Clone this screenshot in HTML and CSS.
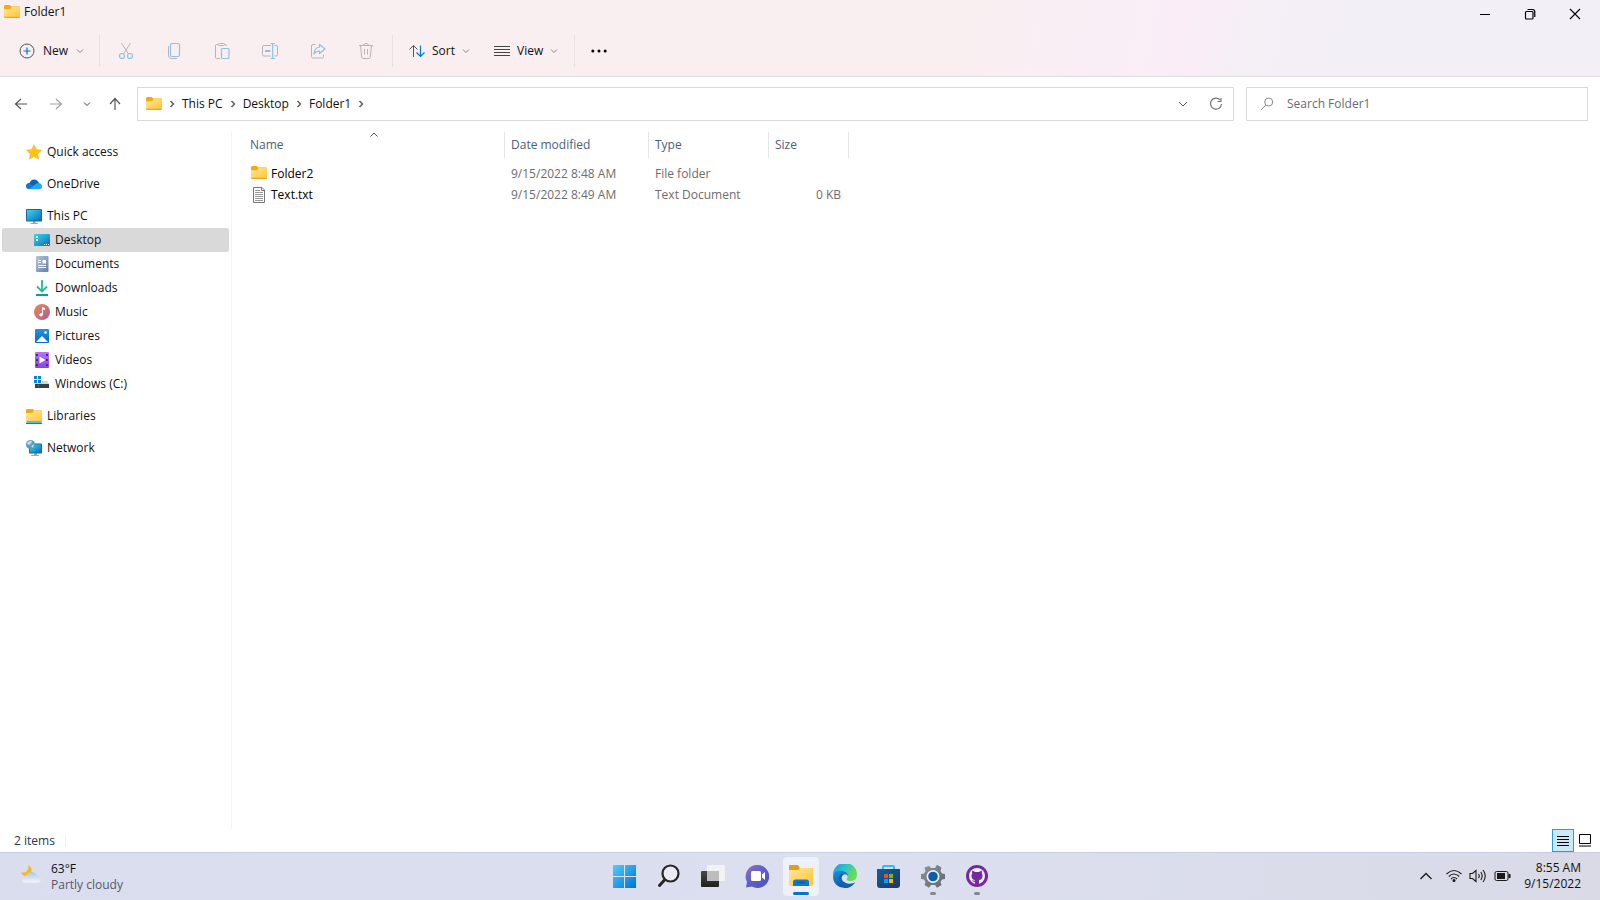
FILE: index.html
```html
<!DOCTYPE html>
<html lang="en">
<head>
<meta charset="utf-8">
<title>Folder1</title>
<link rel="stylesheet" href="styles.css">
</head>
<body>
<svg class="defs" aria-hidden="true">
  <defs>
    <linearGradient id="gFolder" x1="0" y1="0" x2="1" y2="1"><stop offset="0" stop-color="#ffe69a"/><stop offset="1" stop-color="#ffc534"/></linearGradient>
    <linearGradient id="gScreen" x1="0" y1="0" x2="1" y2="1"><stop offset="0" stop-color="#35dbe6"/><stop offset="1" stop-color="#0f68bd"/></linearGradient>
    <linearGradient id="gDoc" x1="0" y1="0" x2="1" y2="1"><stop offset="0" stop-color="#b4c6de"/><stop offset="1" stop-color="#687f9f"/></linearGradient>
    <linearGradient id="gMusic" x1="0" y1="0" x2="1" y2="1"><stop offset="0" stop-color="#f08b55"/><stop offset="1" stop-color="#a85a95"/></linearGradient>
    <linearGradient id="gPic" x1="0" y1="0" x2="0" y2="1"><stop offset="0" stop-color="#1d96e8"/><stop offset="1" stop-color="#0967c2"/></linearGradient>
    <linearGradient id="gVideo" x1="0" y1="0" x2="0" y2="1"><stop offset="0" stop-color="#b477f2"/><stop offset="1" stop-color="#8b43e0"/></linearGradient>
    <linearGradient id="gWin" x1="0" y1="0" x2="1" y2="1"><stop offset="0" stop-color="#4fd0fa"/><stop offset="1" stop-color="#0070d4"/></linearGradient>
    <linearGradient id="gChat" x1="0" y1="0" x2="1" y2="1"><stop offset="0" stop-color="#9a6fb4"/><stop offset="0.4" stop-color="#6661c8"/><stop offset="1" stop-color="#4b50bd"/></linearGradient>
    <linearGradient id="gDark" x1="0" y1="0" x2="0" y2="1"><stop offset="0" stop-color="#484848"/><stop offset="1" stop-color="#1f1f1f"/></linearGradient>
    <linearGradient id="gStore" x1="0" y1="0" x2="1" y2="1"><stop offset="0" stop-color="#0f5f9f"/><stop offset="1" stop-color="#213764"/></linearGradient>
    <linearGradient id="gEdgeTop" x1="0" y1="0" x2="1" y2="0.4"><stop offset="0" stop-color="#1a95dc"/><stop offset="0.5" stop-color="#2cc0cf"/><stop offset="1" stop-color="#69de54"/></linearGradient>
    <linearGradient id="gEdgeLow" x1="0" y1="0" x2="0.6" y2="1"><stop offset="0" stop-color="#1592dd"/><stop offset="1" stop-color="#0a529f"/></linearGradient>
    <linearGradient id="gGear" x1="0" y1="0" x2="1" y2="1"><stop offset="0" stop-color="#8d969e"/><stop offset="1" stop-color="#5e666e"/></linearGradient>
    <linearGradient id="gCloud" x1="0" y1="0" x2="0" y2="1"><stop offset="0" stop-color="#a9c6e4"/><stop offset="1" stop-color="#f1f7fc"/></linearGradient>
    <symbol id="folder" viewBox="0 0 16 13"><path d="M0 1.500Q0 0 1.500 0H5.500L7.500 1.500H16V5H0z" fill="#f2ab09"/><path d="M0 4.200H6L7.800 2H15.500Q16 2 16 2.500V11.500Q16 12.500 15 12.500H1Q0 12.500 0 11.500z" fill="url(#gFolder)"/><path d="M0 11.800Q.3 13 1 13H15Q15.800 13 16 11.800z" fill="#eba51e"/></symbol>
    <symbol id="down" viewBox="0 0 8 8"><path d="M1 2.500 4 5.500 7 2.500" fill="none" stroke="currentColor"/></symbol>
    <symbol id="right" viewBox="0 0 8 8"><path d="M2.500 1 5.500 4 2.500 7" fill="none" stroke="currentColor" stroke-width="1.400"/></symbol>
  </defs>
</svg>

<div class="window">
  <header class="top">
    <div class="titlebar">
      <div class="title"><svg class="folder"><use href="#folder"/></svg><span>Folder1</span></div>
      <div class="caption">
        <button aria-label="Minimize"><svg width="12" height="12" viewBox="0 0 12 12"><path d="M1 6.500H11" stroke="#000"/></svg></button>
        <button aria-label="Restore"><svg width="12" height="12" viewBox="0 0 12 12" fill="none" stroke="#000" stroke-width="1.200"><rect x="1.500" y="3.500" width="7.500" height="7.500" rx="1"/><path d="M3.500 1.500H8.500Q10.800 1.500 10.800 4V9"/></svg></button>
        <button aria-label="Close"><svg width="12" height="12" viewBox="0 0 12 12"><path d="M1 1 11 11M11 1 1 11" stroke="#000" stroke-width="1.100"/></svg></button>
      </div>
    </div>
    <div class="toolbar">
      <button class="tool tool-new"><svg width="16" height="16" viewBox="0 0 16 16" fill="none"><circle cx="8" cy="8" r="7" stroke="#555"/><path d="M8 4.500V11.500M4.500 8H11.500" stroke="#0078d4" stroke-width="1.200"/></svg><span>New</span><svg class="chev"><use href="#down"/></svg></button>
      <div class="group">
        <button class="icon" aria-label="Cut" disabled><svg width="16" height="18" viewBox="0 0 16 18" fill="none"><path d="M3.500 1 10.500 12M12.500 1 5.500 12" stroke="#b9b3b5"/><circle cx="4" cy="14" r="2.500" stroke="#8fc0e8" stroke-width="1.200"/><circle cx="12" cy="14" r="2.500" stroke="#8fc0e8" stroke-width="1.200"/></svg></button>
        <button class="icon" aria-label="Copy" disabled><svg width="16" height="18" viewBox="0 0 16 18" fill="none"><path d="M2.500 4V13Q2.500 16.500 5.500 16.500H11" stroke="#b9b3b5"/><rect x="4.500" y="1.500" width="9" height="13" rx="1.500" stroke="#8fc0e8" stroke-width="1.200"/></svg></button>
        <button class="icon" aria-label="Paste" disabled><svg width="16" height="18" viewBox="0 0 16 18" fill="none"><path d="M4.500 2.500H2.500Q1.500 2.500 1.500 3.500V15.500Q1.500 16.500 2.500 16.500H6M10.500 2.500H11.500Q12.500 2.500 12.500 4" stroke="#b9b3b5"/><rect x="4.500" y="1.500" width="6" height="2" rx="1" stroke="#b9b3b5"/><rect x="7.500" y="6.500" width="7.500" height="10" rx="1" stroke="#8fc0e8" stroke-width="1.200"/></svg></button>
        <button class="icon" aria-label="Rename" disabled><svg width="16" height="18" viewBox="0 0 16 18" fill="none"><path d="M9 3.500H2Q.5 3.500 .5 5V12.500Q.5 14 2 14H9M12.500 3.500H14Q15.500 3.500 15.500 5V12.500Q15.500 14 14 14H12.500" stroke="#b9b3b5"/><path d="M3 9H8.500" stroke="#8fc0e8" stroke-width="2"/><path d="M8.500 1.500H13M10.700 1.500V16.500M8.500 16.500H13" stroke="#8fc0e8" stroke-width="1.200"/></svg></button>
        <button class="icon" aria-label="Share" disabled><svg width="16" height="18" viewBox="0 0 16 18" fill="none"><path d="M5.500 2.500H3Q1.500 2.500 1.500 4V14.500Q1.500 16 3 16H12Q13.500 16 13.500 14.500V12.500" stroke="#b9b3b5"/><path d="M9.500 2.500 15 7 9.500 11.500V9Q6 9 4 12Q4.500 5.500 9.500 5z" stroke="#8fc0e8" stroke-width="1.200" stroke-linejoin="round"/></svg></button>
        <button class="icon" aria-label="Delete" disabled><svg width="16" height="18" viewBox="0 0 16 18" fill="none" stroke="#b9b3b5"><path d="M1 3.500H15M5.500 3.500Q5.500 1.500 8 1.500T10.500 3.500M2.500 3.500 3.800 15.500Q4 16.500 5 16.500H11Q12 16.500 12.200 15.500L13.500 3.500M6.500 7V12.500M9.500 7V12.500"/></svg></button>
      </div>
      <div class="group views">
        <button class="tool"><svg width="16" height="16" viewBox="0 0 16 16" fill="none"><path d="M.5 6.500 4.500 2.500 8.500 6.500M4.500 2.500V14" stroke="#555"/><path d="M7.500 9.500 11.500 13.500 15.500 9.500M11.500 2.500V13.500" stroke="#0078d4" stroke-width="1.200"/></svg><span>Sort</span><svg class="chev"><use href="#down"/></svg></button>
        <button class="tool"><svg width="16" height="16" viewBox="0 0 16 16"><path d="M0 3.500H16M0 6.500H16M0 9.500H16M0 12.500H16" stroke="#444"/></svg><span>View</span><svg class="chev"><use href="#down"/></svg></button>
      </div>
      <button class="more" aria-label="See more"><svg width="16" height="4" viewBox="0 0 16 4"><circle cx="1.800" cy="2" r="1.500"/><circle cx="8" cy="2" r="1.500"/><circle cx="14.200" cy="2" r="1.500"/></svg></button>
    </div>
  </header>

  <nav class="navbar" aria-label="Navigation">
    <div class="history">
      <button aria-label="Back"><svg width="14" height="14" viewBox="0 0 14 14" fill="none" stroke="#555" stroke-width="1.200"><path d="M7 2 1.500 7 7 12M1.500 7H13"/></svg></button>
      <button aria-label="Forward"><svg width="14" height="14" viewBox="0 0 14 14" fill="none" stroke="#a0a0a0" stroke-width="1.200"><path d="M7 2 12.500 7 7 12M12.500 7H1"/></svg></button>
      <button aria-label="Recent locations"><svg class="chev dark"><use href="#down"/></svg></button>
      <button aria-label="Up"><svg width="14" height="14" viewBox="0 0 14 14" fill="none" stroke="#555" stroke-width="1.200"><path d="M2 7 7 1.500 12 7M7 1.500V13"/></svg></button>
    </div>
    <div class="address">
      <svg class="folder"><use href="#folder"/></svg>
      <svg class="sep"><use href="#right"/></svg><a href="#pc">This PC</a>
      <svg class="sep"><use href="#right"/></svg><a href="#desktop">Desktop</a>
      <svg class="sep"><use href="#right"/></svg><a href="#folder1">Folder1</a>
      <svg class="sep"><use href="#right"/></svg>
      <div class="address-actions">
        <button aria-label="Previous locations"><svg width="10" height="10" viewBox="0 0 10 10"><path d="M1 3 5 7 9 3" fill="none" stroke="#555"/></svg></button>
        <button aria-label="Refresh"><svg width="14" height="14" viewBox="0 0 14 14" fill="none" stroke="#777" stroke-width="1.200"><path d="M11 2.800A5.500 5.500 0 1 0 12.500 7M12 1V4.500H8.500"/></svg></button>
      </div>
    </div>
    <label class="search"><svg width="14" height="14" viewBox="0 0 14 14" fill="none" stroke="#888"><circle cx="8.700" cy="5" r="4"/><path d="M5.800 8 1 13"/></svg><input type="text" placeholder="Search Folder1" aria-label="Search Folder1"></label>
  </nav>

  <main class="content">
    <nav class="sidebar" aria-label="Folders">
      <ul>
        <li class="gap"><a href="#quick"><svg viewBox="0 0 16 16"><path d="M8 .8 10.300 5.500 15.500 6.200 11.700 9.900 12.600 15 8 12.600 3.400 15 4.300 9.900 .5 6.200 5.700 5.500z" fill="#ffc20e" stroke="#f7ad12" stroke-width=".5"/></svg>Quick access</a></li>
        <li class="gap"><a href="#onedrive"><svg viewBox="0 0 16 16"><path d="M0 10Q.3 7 3.500 7Q5 3 9 3.500Q12 4 13 7L6 12Z" fill="#0864b8"/><path d="M2 13Q0 12.500 0 10.500Q.5 7.500 4 7.500L14 13z" fill="#0b78d4"/><path d="M3 13.300 10.500 7.500Q15 6 16 10Q16 13.300 13 13.300z" fill="#28a8ea"/></svg>OneDrive</a></li>
        <li><a href="#pc"><svg viewBox="0 0 16 16"><path d="M7 13H9.500V15H12V16H4.500V15H7z" fill="#9ca7b0"/><rect y="1" width="16" height="12.500" rx="1" fill="#17699d"/><rect x="1" y="2" width="14" height="10.500" fill="url(#gScreen)"/></svg>This PC</a>
          <ul>
            <li><a class="selected" href="#desktop" aria-current="page"><svg viewBox="0 0 16 16"><rect y="2" width="16" height="12" rx="1" fill="url(#gScreen)"/><path d="M2 4H4V6H2zM2 7H4V9H2z" fill="#fff"/><path d="M10 12.500H11M12 12.500H13M14 12.500H15" stroke="#fff"/></svg>Desktop</a></li>
            <li><a href="#documents"><svg viewBox="0 0 16 16"><rect x="2" width="12.500" height="16" rx="1" fill="url(#gDoc)"/><path d="M4 4.500H7M4 6.500H7M4 9.500H12M4 11.500H12" stroke="#fff"/><path d="M8.500 4H12V7.500H8.500z" fill="#fff"/></svg>Documents</a></li>
            <li><a href="#downloads"><svg viewBox="0 0 16 16" fill="none"><path d="M8 0V11M3 6.500 8 11.500 13 6.500" stroke="#25bb99" stroke-width="1.800"/><path d="M2 15H14" stroke="#0aa184" stroke-width="2"/></svg>Downloads</a></li>
            <li><a href="#music"><svg viewBox="0 0 16 16"><circle cx="8" cy="8" r="8" fill="url(#gMusic)"/><path d="M8 3 11 4V6L9 5.500V10.500Q8.500 12.500 6.800 12.500Q5 12 5.200 10.500Q6 9 8 9.300z" fill="#fff"/></svg>Music</a></li>
            <li><a href="#pictures"><svg viewBox="0 0 16 16"><rect x="1" y="1" width="14" height="14" rx="1" fill="url(#gPic)"/><path d="M2 14 8 8 14 14z" fill="#fff"/><circle cx="11.500" cy="4.500" r="1.300" fill="#fff"/></svg>Pictures</a></li>
            <li><a href="#videos"><svg viewBox="0 0 16 16"><rect x="1" width="14" height="16" rx="1" fill="url(#gVideo)"/><path d="M3 2V15M13 2V15" stroke="#512290" stroke-width="2" stroke-dasharray="2 3"/><path d="M5.500 4.500 11.500 8 5.500 11.500z" fill="#fff"/></svg>Videos</a></li>
            <li class="gap"><a href="#c"><svg viewBox="0 0 16 16"><path d="M0 0H3V3H0zM4 0H7V3H4zM0 4H3V7H0zM4 4H7V7H4z" fill="#0a83dc"/><path d="M8 5H13L15 8H1V7H8z" fill="#d5d7d9"/><path d="M1 8H15V12H1z" fill="#3c4043"/><path d="M4 10H5" stroke="#37e14b"/></svg>Windows (C:)</a></li>
          </ul>
        </li>
        <li class="gap"><a href="#libraries"><svg viewBox="0 0 16 16"><path d="M0 2Q0 1 1 1H7L8 2.500H16V6H0z" fill="#f2ab09"/><path d="M0 5H6L8 3H16V14H0z" fill="url(#gFolder)"/><path d="M1 13H15L16 15.500H0z" fill="#45c3ee"/><path d="M0 15.500H16" stroke="#087dcb"/></svg>Libraries</a></li>
        <li><a href="#network"><svg viewBox="0 0 16 16"><path d="M8 13H11V15H13V16H5V15H8z" fill="#9ca7b0"/><rect x="3" y="3.500" width="13" height="10" rx="1" fill="#156ca1"/><rect x="4" y="4.500" width="11" height="8" fill="url(#gScreen)"/><circle cx="4.500" cy="4.500" r="4.500" fill="#5b9cc3"/><path d="M1 3Q3 0 6 1L5 4 2 5zM5 6 8 4 7 8z" fill="#b9dff0"/></svg>Network</a></li>
      </ul>
    </nav>
    <section class="files">
      <table>
        <colgroup><col class="c-name"><col class="c-date"><col class="c-type"><col class="c-size"></colgroup>
        <thead><tr><th aria-sort="ascending">Name<svg class="sorted" viewBox="0 0 8 5"><path d="M.5 4.500 4 1 7.500 4.500" fill="none" stroke="#555"/></svg></th><th>Date modified</th><th>Type</th><th>Size</th></tr></thead>
        <tbody>
          <tr><td><div class="file"><svg class="folder"><use href="#folder"/></svg>Folder2</div></td><td>9/15/2022 8:48 AM</td><td>File folder</td><td></td></tr>
          <tr><td><div class="file"><svg width="16" height="16" viewBox="0 0 16 16"><path d="M2.500 .5H11L13.500 3V15.500H2.500z" fill="#fff" stroke="#777"/><path d="M10.500 .5V3.500H13.500" fill="none" stroke="#777"/><path d="M4 3.500H9M4 5.500H12M4 7.500H12M4 9.500H12M4 11.500H12M4 13.500H12" stroke="#9a9a9a"/></svg>Text.txt</div></td><td>9/15/2022 8:49 AM</td><td>Text Document</td><td>0 KB</td></tr>
        </tbody>
      </table>
    </section>
  </main>

  <footer class="status">
    <span class="count">2 items</span>
    <div class="layouts">
      <button class="on" aria-label="Details view"><svg width="12" height="12" viewBox="0 0 12 12"><path d="M0 1.500H12M0 4.500H12M0 7.500H12M0 10.500H12" stroke="#000"/></svg></button>
      <button aria-label="Large icons view"><svg width="12" height="13" viewBox="0 0 12 13" fill="none" stroke="#000"><path d="M.5 .5H11.500V9.500H.5zM0 12H12"/></svg></button>
    </div>
  </footer>
</div>

<footer class="taskbar">
  <button class="weather">
    <svg width="22" height="20" viewBox="0 0 22 20"><path d="M8.500 1Q12 3 11.500 7T5 12Q2 11.500 1 8.500Q9 9.500 8.500 1z" fill="#fdb913"/><path d="M5 18.500Q2 18 2.200 15.500Q3 13 5.500 13Q7 7.500 12 8Q16 8.500 17 12Q21 12 21 15.500Q20.500 18.500 17.500 18.500z" fill="url(#gCloud)"/></svg>
    <span class="lines"><span>63°F</span><span class="muted">Partly cloudy</span></span>
  </button>
  <div class="apps">
    <button aria-label="Start"><svg viewBox="0 0 24 24"><path d="M0 1H11V12H0zM12 1H23V12H12zM0 13H11V24H0zM12 13H23V24H12z" fill="url(#gWin)"/></svg></button>
    <button aria-label="Search"><svg viewBox="0 0 24 24" fill="none" stroke="#262626"><circle cx="13.500" cy="9.500" r="8" fill="#e9ebf5" stroke-width="2.200"/><path d="M7.500 16 2.500 21.500" stroke-width="3" stroke-linecap="round"/></svg></button>
    <button aria-label="Task view"><svg viewBox="0 0 24 24"><rect x="0" y="7" width="18" height="16" rx="1" fill="url(#gDark)"/><rect x="6" y="1" width="18" height="16" rx="1" fill="#f3f3f3"/><rect x="6" y="7" width="12" height="10" fill="#bdbdbd"/></svg></button>
    <button aria-label="Chat"><svg viewBox="0 0 24 24"><path d="M12.500 1A11.500 11.500 0 1 1 7 22.500L1 23.500 2 18A11.500 11.500 0 0 1 12.500 1z" fill="url(#gChat)"/><rect x="6" y="7" width="10" height="10" rx="1.500" fill="#fff"/><path d="M17 10.500 20 8V16L17 13.500z" fill="#fff"/></svg></button>
    <button class="active" aria-label="File Explorer"><svg viewBox="0 0 24 24"><path d="M0 2Q0 1 1 1H9L11 4H24V8H0z" fill="#dfa014"/><path d="M0 6H9L11 4H23Q24 4 24 5V20Q24 22 22 22H2Q0 22 0 20z" fill="url(#gFolder)"/><path d="M4 22V18Q4 15.500 6.500 15.500H17.500Q20 15.500 20 18V22z" fill="#1277c6"/><path d="M8 18.500H16" stroke="#0a5da4" stroke-width="1.500"/></svg><i class="run"></i></button>
    <button aria-label="Microsoft Edge"><svg viewBox="0 0 24 24"><path d="M0 11A12 12 0 0 1 24 10.500Q24 16.500 18 17Q14 17 13.800 15Q16 11 12 9Q7 6 0 11z" fill="url(#gEdgeTop)"/><path d="M0 12Q1 6.800 7.500 6.800Q14.500 7 15 12Q14 10 11.500 10.200Q8 11 8.500 15Q10 20 16 20Q20 20 22 18.500Q18 24 12 24Q0 23 0 12z" fill="url(#gEdgeLow)"/><path d="M8 9.800Q4 15 8 20T16 23.200Q19.500 22 22 18.500Q18 20.500 14 19.500Q8 17.500 8.500 13.500Q9 10.500 11.500 10.200z" fill="#0c63b4"/></svg></button>
    <button aria-label="Microsoft Store"><svg viewBox="0 0 24 24"><path d="M6 6V3Q6 2 7 2H16Q17 2 17 3V6" fill="none" stroke="#31bdf2" stroke-width="2"/><path d="M0 5H23V21Q23 24 20 24H3Q0 24 0 21z" fill="url(#gStore)"/><path d="M7 10H11V14H7z" fill="#f25022"/><path d="M12 10H16V14H12z" fill="#7fba00"/><path d="M7 15H11V19H7z" fill="#00a4ef"/><path d="M12 15H16V19H12z" fill="#ffb900"/></svg></button>
    <button aria-label="Settings"><svg viewBox="0 0 24 24"><path d="M8 2 10 4H14L16 .8 20.500 3.500 19.500 7 21 9.500 24 10V15L21 15.500 19.500 18 20.500 21 16 23.800 14 21H10L8 23.800 3.500 21 4.500 18 3 15.500 0 15V10L3 9.500 4.500 7 3.500 3.500z" fill="url(#gGear)"/><circle cx="12" cy="12.500" r="6.500" fill="#eef1f5"/><circle cx="12" cy="12.500" r="4.800" fill="#0c5eac"/></svg><i class="run"></i></button>
    <button aria-label="GitHub Desktop"><svg viewBox="0 0 24 24"><circle cx="12" cy="12" r="11" fill="#722a9c"/><circle cx="12" cy="12" r="8" fill="#f3eef7"/><path d="M7.500 6.500 10 8H14L16.500 6.500Q17.300 8 16.800 9.500Q18 11 17.300 13.500Q16.500 16 14 16V20H10V18Q8 18.200 7 16L8 16.300Q9 17.200 10 16.500V16Q7.500 16 6.700 13.500Q6 11 7.200 9.500Q6.700 8 7.500 6.500z" fill="#722a9c"/></svg><i class="run"></i></button>
  </div>
  <div class="tray">
    <button aria-label="Hidden icons"><svg width="12" height="8" viewBox="0 0 12 8"><path d="M.5 7 6 1.500 11.500 7" fill="none" stroke="#1a1a1a" stroke-width="1.300"/></svg></button>
    <button class="indicators" aria-label="Network, volume and battery">
      <svg width="16" height="14" viewBox="0 0 16 14" fill="none" stroke="#1a1a1a" stroke-width="1.100"><path d="M.5 5Q8-2 15.500 5M2.800 7.500Q8 2.500 13.200 7.500M5 10Q8 7 11 10"/><circle cx="8" cy="11.500" r="1" fill="#1a1a1a"/></svg>
      <svg width="18" height="14" viewBox="0 0 18 14" fill="none" stroke="#1a1a1a" stroke-width="1.100"><path d="M1 4.500H3.500L7 1.500V12.500L3.500 9.500H1zM9.500 5Q11 7 9.500 9M11.800 3Q14.500 7 11.800 11M14 1Q18.500 7 14 13"/></svg>
      <svg width="17" height="14" viewBox="0 0 17 14"><rect x="1" y="2.500" width="13" height="9" rx="1.500" fill="none" stroke="#1a1a1a"/><rect x="3" y="4" width="8" height="6" fill="#1a1a1a"/><path d="M15.500 5V9" stroke="#1a1a1a" stroke-width="2"/></svg>
    </button>
    <button class="clock lines"><span>8:55 AM</span><span>9/15/2022</span></button>
  </div>
</footer>
</body>
</html>
```
FILE: styles.css
```css
* { box-sizing: border-box; }
html, body { height: 100%; margin: 0; }
body {
  display: flex;
  flex-direction: column;
  background: #fff;
  color: #111;
  font: 12px/16px "Segoe UI", "Open Sans", "Noto Sans", sans-serif;
  overflow: hidden;
}
button { display: flex; align-items: center; justify-content: center; padding: 0; border: 0; background: none; color: inherit; font: inherit; }
a { color: inherit; text-decoration: none; }
svg { display: block; flex: none; }
ul { margin: 0; padding: 0; list-style: none; }
.defs { position: absolute; width: 0; height: 0; }
.folder { width: 16px; height: 13px; margin-bottom: 2px; }
.chev { width: 8px; height: 8px; color: #8a8587; }
.dark { color: #444; }

.window { flex: 1; min-height: 0; display: flex; flex-direction: column; }
.top {
  border-bottom: 1px solid #e2dbe1;
  background: linear-gradient(100deg, #f9eff1 0%, #f9eff1 60%, #faedf8 74%, #f5eff6 78%, #f2eff7 90%, #f2eff7 100%);
}
.titlebar { display: flex; justify-content: space-between; height: 28px; }
.title { display: flex; align-items: center; gap: 4px; height: 24px; padding-left: 4px; }
.caption { display: flex; padding-right: 3px; }
.caption button { width: 45px; height: 28px; }

.toolbar { display: flex; align-items: center; height: 48px; }
.toolbar > * { height: 32px; margin-bottom: 3px; }
.tool { gap: 8px; }
.tool-new { width: 99px; padding-left: 4px; }
.group { display: flex; align-items: center; border-left: 1px solid #e9e0e3; padding: 0 2px; }
.icon { width: 48px; height: 32px; }
.views { gap: 24px; padding: 0 16px; border-right: 1px solid #e9e0e3; }
.views .tool { gap: 7px; }
.more { width: 48px; }

.navbar { display: flex; align-items: center; padding: 10px 12px 11px 0; }
.history { display: flex; width: 137px; padding-left: 7px; }
.history button { width: 28px; height: 34px; }
.history button:nth-child(2) { margin: 0 5px 0 7px; }
.history button:nth-child(3) { width: 24px; margin-right: 2px; }
.address { flex: 1; display: flex; align-items: center; gap: 6px; height: 34px; padding-left: 8px; border: 1px solid #d9d9d9; }
.sep { width: 8px; height: 8px; color: #555; }
.address-actions { display: flex; margin-left: auto; padding-right: 1px; }
.address-actions button { width: 33px; height: 32px; }
.search { display: flex; align-items: center; gap: 13px; width: 342px; height: 34px; margin-left: 12px; padding: 0 13px; border: 1px solid #d9d9d9; }
.search input { flex: 1; min-width: 0; padding: 0; border: 0; outline: 0; background: none; font: inherit; }
.search input::placeholder { color: #6b6b6b; opacity: 1; }

.content { flex: 1; min-height: 0; display: flex; }
.sidebar { width: 232px; padding: 8px 2px 0; border-right: 1px solid #f3f3f3; }
.sidebar a { display: flex; align-items: center; gap: 5px; height: 24px; padding-left: 24px; border-radius: 2px; }
.sidebar ul ul a { padding-left: 32px; }
.sidebar svg { width: 16px; height: 16px; }
.sidebar .gap { margin-bottom: 8px; }
.sidebar .selected { background: #d9d9d9; }

.files { flex: 1; }
table { width: 617px; table-layout: fixed; border-collapse: separate; border-spacing: 0; }
.c-name { width: 273px; }
.c-date { width: 144px; }
.c-type { width: 120px; }
.c-size { width: 80px; }
th { position: relative; height: 26px; padding: 0 6px; border-right: 1px solid #e5e5e5; color: #4c607a; font-weight: 400; text-align: left; }
th:first-child { padding-left: 18px; }
.sorted { position: absolute; top: 0; right: 126px; width: 8px; height: 5px; }
td { height: 21px; padding: 0 6px; color: #6d6d6d; }
td:first-child { padding-left: 19px; color: #000; }
td:last-child { padding-right: 8px; text-align: right; }
.file { display: flex; align-items: center; gap: 4px; }
tbody::before { content: ""; display: block; height: 5px; }

.status { display: flex; align-items: center; justify-content: space-between; height: 23px; padding: 0 4px 0 14px; }
.count { padding-right: 10px; border-right: 1px solid #eee; color: #1e395b; line-height: 12px; }
.layouts { display: flex; }
.layouts button { width: 22px; height: 23px; border: 1px solid transparent; }
.layouts .on { border-color: #26a0da; background: #cce8f6; }

.taskbar {
  display: grid;
  grid-template-columns: 1fr auto 1fr;
  height: 48px;
  border-top: 1px solid #c9cde0;
  background: linear-gradient(90deg, #d9dded 0%, #dcdff0 55%, #d9dae6 100%);
}
.lines { display: flex; flex-direction: column; }
.weather { justify-content: flex-start; gap: 9px; padding-left: 20px; text-align: left; }
.weather svg { margin-bottom: 6px; }
.muted { color: #56596a; }
.apps { display: flex; padding-left: 2px; }
.apps button { position: relative; width: 44px; }
.apps svg { width: 24px; height: 24px; margin-bottom: 2px; }
.apps .active::before { content: ""; position: absolute; inset: 4px; border-radius: 4px; background: #eff1f9; }
.active svg { position: relative; }
.run { position: absolute; bottom: 5px; width: 6px; height: 3px; border-radius: 2px; background: #85878f; }
.active .run { width: 16px; background: #0075d3; }
.tray { display: flex; justify-content: flex-end; align-items: center; padding: 0 19px 2px 0; }
.indicators { gap: 7px; margin: 0 13px 0 14px; }
.clock { align-items: flex-end; }
```
